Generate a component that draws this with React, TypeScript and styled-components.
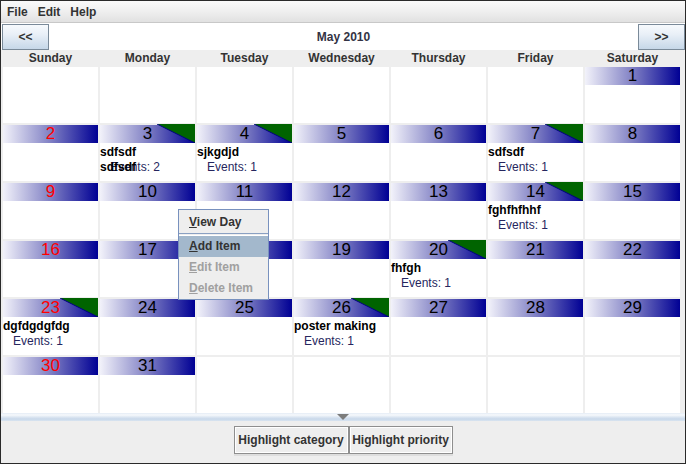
import React from "react";
import styled, { createGlobalStyle } from "styled-components";

const GlobalStyle = createGlobalStyle`
  html, body { margin: 0; padding: 0; background: #ffffff; }
  body { font-family: "Liberation Sans", Arial, sans-serif; }
  * { box-sizing: border-box; }
`;

const FONT = `"Liberation Sans", Arial, sans-serif`;

const Window = styled.div`
  position: relative;
  width: 686px;
  height: 464px;
  border: 1px solid #2a2a2a;
  background: #ffffff;
  display: flex;
  flex-direction: column;
  overflow: hidden;
  font-family: ${FONT};
`;

const MenuBar = styled.div`
  height: 22px;
  flex: none;
  border-bottom: 1px solid #c8c8c8;
  background: linear-gradient(to bottom, #fafafa 0%, #efefef 50%, #e1e1e1 100%);
  display: flex;
  align-items: center;
  padding-left: 1px;
`;

const MenuTitle = styled.span`
  font: bold 12px ${FONT};
  color: #333333;
  padding: 0 5px;
`;

const NavRow = styled.div`
  height: 27px;
  flex: none;
  display: flex;
  align-items: flex-start;
  justify-content: space-between;
  padding: 1px 0 0 1px;
  background: #ffffff;
`;

const NavButton = styled.button`
  width: 47px;
  height: 26px;
  border: 1px solid #7a8a99;
  border-radius: 0;
  background: linear-gradient(to bottom, #f7fafd 0%, #e8eff7 40%, #c6d7e8 100%);
  font: bold 12px ${FONT};
  color: #333333;
  padding: 0;
  margin: 0;
`;

const MonthTitle = styled.div`
  flex: 1;
  text-align: center;
  font: bold 12px ${FONT};
  color: #333344;
  line-height: 26px;
`;

const DayNames = styled.div`
  height: 17px;
  flex: none;
  background: #eeeeee;
  display: grid;
  grid-template-columns: repeat(7, 95px);
  column-gap: 2px;
  padding-left: 2px;
`;

const DayName = styled.div`
  text-align: center;
  font: bold 12px ${FONT};
  color: #333333;
  line-height: 17px;
`;

const Grid = styled.div`
  height: 346px;
  flex: none;
  background: #eeeeee;
  display: grid;
  grid-template-columns: repeat(7, 95px);
  grid-auto-rows: 56px;
  gap: 2px;
  padding-left: 2px;
`;

const Cell = styled.div`
  position: relative;
  background: #ffffff;
`;

const CellHeader = styled.div<{ $sunday: boolean }>`
  position: relative;
  height: 18px;
  background: linear-gradient(to right, #f2f2fa 0%, #8080c4 50%, #000094 100%);
  text-align: center;
  font: 17px ${FONT};
  line-height: 18px;
  color: ${(p) => (p.$sunday ? "#ff0000" : "#000000")};
`;

const Flag = styled.svg`
  position: absolute;
  top: -1px;
  right: 0;
  width: 38px;
  height: 19px;
`;

const CellBody = styled.div`
  padding-top: 2px;
`;

const EventTitle = styled.div`
  font: bold 12px ${FONT};
  color: #000000;
  line-height: 15px;
  white-space: nowrap;
`;

const EventLine = styled.div`
  position: relative;
  line-height: 15px;
`;

const EventCount = styled.div`
  font: 12px ${FONT};
  color: #26265e;
  line-height: 15px;
  padding-left: 10px;
  white-space: nowrap;
`;

const OverlapTitle = styled(EventTitle)`
  position: absolute;
  left: 0;
  top: 0;
`;

const Divider = styled.div`
  position: relative;
  height: 8px;
  flex: none;
  background: linear-gradient(
    to bottom,
    #e4ecf5 0%,
    #f6f9fc 25%,
    #dde7f2 50%,
    #c8d8ea 75%,
    #d9e4f0 100%
  );
  display: flex;
  justify-content: center;
`;

const Arrow = styled.div`
  margin-top: 1px;
  width: 0;
  height: 0;
  border-left: 6px solid transparent;
  border-right: 6px solid transparent;
  border-top: 6px solid #7c7c7c;
`;

const BottomPanel = styled.div`
  flex: 1;
  background: #eeeeee;
  display: flex;
  justify-content: center;
  align-items: flex-start;
  padding-top: 5px;
`;

const ButtonGroup = styled.div`
  display: flex;
  border-bottom: 2px solid #dedede;
`;

const ActionButton = styled.button<{ $w: number }>`
  width: ${(p) => p.$w}px;
  height: 28px;
  border: 1px solid #8e8e8e;
  border-radius: 0;
  box-shadow: inset 1px 1px 0 #ffffff, inset -1px -1px 0 #ffffff;
  background: #eeeeee;
  font: bold 12px ${FONT};
  color: #333333;
  padding: 0;
  margin: 0;
`;

const PopupMenu = styled.div`
  position: absolute;
  left: 177px;
  top: 208px;
  width: 91px;
  height: 91px;
  border: 1px solid #7891be;
  background: #eeeeee;
  padding-top: 1px;
`;

const PopupItem = styled.div<{ $active?: boolean; $disabled?: boolean; $h?: number; $shift?: number }>`
  height: ${(p) => p.$h ?? 21}px;
  line-height: ${(p) => (p.$h ?? 21) - (p.$shift ?? 3)}px;
  padding-top: ${(p) => p.$shift ?? 3}px;
  padding-left: 10px;
  font: bold 12px ${FONT};
  color: ${(p) => (p.$disabled ? "#a0a0a0" : "#333333")};
  background: ${(p) => (p.$active ? "#a3b8cc" : "transparent")};
  white-space: nowrap;
`;

const Mnemonic = styled.span`
  text-decoration: underline;
`;

const PopupSeparator = styled.div`
  height: 3px;
  border-top: 1px solid #8aa0c2;
  border-bottom: 1px solid #ffffff;
`;

type Ev = { title: string; count: number; overlap?: string };

const EVENTS: Record<number, Ev> = {
  3: { title: "sdfsdf", count: 2, overlap: "sdfsdf" },
  4: { title: "sjkgdjd", count: 1 },
  7: { title: "sdfsdf", count: 1 },
  14: { title: "fghfhfhhf", count: 1 },
  20: { title: "fhfgh", count: 1 },
  23: { title: "dgfdgdgfdg", count: 1 },
  26: { title: "poster making", count: 1 },
};

const DAYS = ["Sunday", "Monday", "Tuesday", "Wednesday", "Thursday", "Friday", "Saturday"];

function DayCell({ index }: { index: number }) {
  const day = index - 5;
  if (day < 1 || day > 31) return <Cell />;
  const ev = EVENTS[day];
  return (
    <Cell>
      <CellHeader $sunday={index % 7 === 0}>
        {day}
        {ev && (
          <Flag viewBox="0 0 38 19">
            <polygon points="0,0 38,0 38,19" fill="#006400" />
            <line x1="0" y1="0" x2="38" y2="19" stroke="#000080" strokeWidth="1" />
          </Flag>
        )}
      </CellHeader>
      {ev && (
        <CellBody>
          <EventTitle>{ev.title}</EventTitle>
          <EventLine>
            <EventCount>Events: {ev.count}</EventCount>
            {ev.overlap && <OverlapTitle>{ev.overlap}</OverlapTitle>}
          </EventLine>
        </CellBody>
      )}
    </Cell>
  );
}

export default function App() {
  return (
    <>
      <GlobalStyle />
      <Window>
        <MenuBar>
          <MenuTitle>File</MenuTitle>
          <MenuTitle>Edit</MenuTitle>
          <MenuTitle>Help</MenuTitle>
        </MenuBar>
        <NavRow>
          <NavButton>&lt;&lt;</NavButton>
          <MonthTitle>May 2010</MonthTitle>
          <NavButton>&gt;&gt;</NavButton>
        </NavRow>
        <DayNames>
          {DAYS.map((d) => (
            <DayName key={d}>{d}</DayName>
          ))}
        </DayNames>
        <Grid>
          {Array.from({ length: 42 }, (_, i) => (
            <DayCell key={i} index={i} />
          ))}
        </Grid>
        <Divider>
          <Arrow />
        </Divider>
        <BottomPanel>
          <ButtonGroup>
            <ActionButton $w={115}>Highlight category</ActionButton>
            <ActionButton $w={104}>Highlight priority</ActionButton>
          </ButtonGroup>
        </BottomPanel>
        <PopupMenu>
          <PopupItem $h={22} $shift={4}>
            <Mnemonic>V</Mnemonic>iew Day
          </PopupItem>
          <PopupSeparator />
          <PopupItem $active>
            <Mnemonic>A</Mnemonic>dd Item
          </PopupItem>
          <PopupItem $disabled>
            <Mnemonic>E</Mnemonic>dit Item
          </PopupItem>
          <PopupItem $disabled>
            <Mnemonic>D</Mnemonic>elete Item
          </PopupItem>
        </PopupMenu>
      </Window>
    </>
  );
}
